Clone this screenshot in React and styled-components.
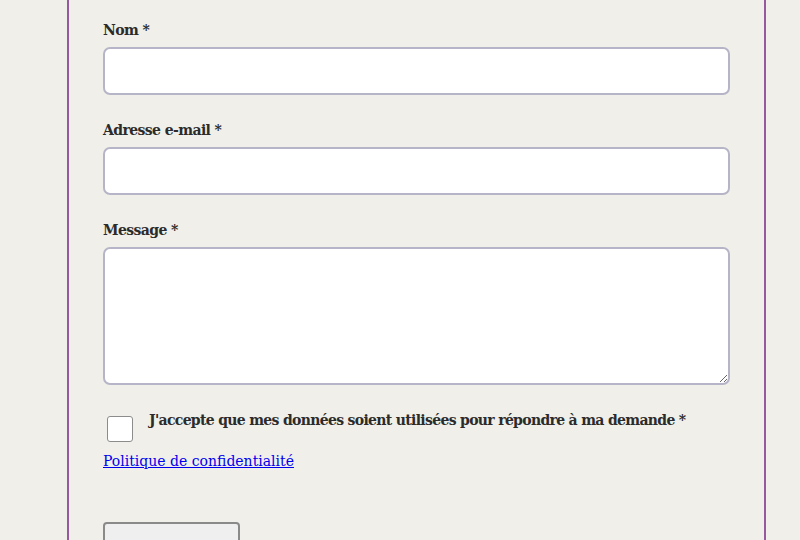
import React from 'react';
import styled, { createGlobalStyle } from 'styled-components';

const GlobalStyle = createGlobalStyle`
  html, body {
    margin: 0;
    padding: 0;
    background: #f0efe9;
    overflow: hidden;
  }
  body {
    font-family: 'DejaVu Serif', 'Liberation Serif', serif;
    color: #2b2b2b;
  }
`;

const Page = styled.div`
  height: 540px;
  overflow: hidden;
`;

const Panel = styled.form`
  margin-left: 67px;
  width: 699px;
  min-height: 540px;
  border-left: 2px solid #96589f;
  border-right: 2px solid #96589f;
  padding: 19px 34px 0 34px;
  box-sizing: border-box;
`;

const Field = styled.div`
  display: flex;
  flex-direction: column;
  margin-bottom: ${(p) => (p.$last ? '0' : '24px')};
`;

const Label = styled.label`
  font-size: 14px;
  font-weight: bold;
  line-height: 22px;
  margin-bottom: 6px;
  letter-spacing: -0.6px;
`;

const Input = styled.input`
  height: 48px;
  width: 100%;
  box-sizing: border-box;
  background: #fff;
  border: 2px solid #b6b5c7;
  border-radius: 7px;
  outline: none;
  padding: 0 12px;
  font: inherit;
`;

const TextArea = styled.textarea`
  height: 138px;
  width: 100%;
  box-sizing: border-box;
  background: #fff;
  border: 2px solid #b6b5c7;
  border-radius: 7px;
  outline: none;
  padding: 8px 12px;
  font: inherit;
  resize: vertical;
  display: block;
`;

const ConsentRow = styled.div`
  display: flex;
  align-items: flex-start;
  margin-top: 30px;
`;

const Box = styled.input`
  appearance: none;
  width: 26px;
  height: 26px;
  margin: 1px 16px 0 4px;
  background: #fff;
  border: 1px solid #8c8c8c;
  border-radius: 3px;
  flex-shrink: 0;
`;

const ConsentText = styled.span`
  font-size: 14px;
  font-weight: bold;
  line-height: 20px;
  margin-top: -5px;
  letter-spacing: -0.68px;
  white-space: nowrap;
`;

const PrivacyLink = styled.a`
  display: inline-block;
  margin-top: 8px;
  font-size: 14px;
  line-height: 22px;
  color: #0000ee;
  text-decoration: underline;
`;

const Submit = styled.button`
  display: block;
  margin-top: 50px;
  width: 137px;
  height: 44px;
  background: #efefef;
  border: 2px solid #8a8a8a;
  border-radius: 4px;
`;

export default function App() {
  return (
    <Page>
      <GlobalStyle />
      <Panel onSubmit={(e) => e.preventDefault()}>
        <Field>
          <Label htmlFor="nom">Nom *</Label>
          <Input id="nom" type="text" />
        </Field>
        <Field>
          <Label htmlFor="email">Adresse e-mail *</Label>
          <Input id="email" type="email" />
        </Field>
        <Field $last>
          <Label htmlFor="message">Message *</Label>
          <TextArea id="message" />
        </Field>
        <ConsentRow>
          <Box type="checkbox" id="consent" />
          <ConsentText>J'accepte que mes données soient utilisées pour répondre à ma demande *</ConsentText>
        </ConsentRow>
        <PrivacyLink href="#">Politique de confidentialité</PrivacyLink>
        <Submit type="submit" />
      </Panel>
    </Page>
  );
}
